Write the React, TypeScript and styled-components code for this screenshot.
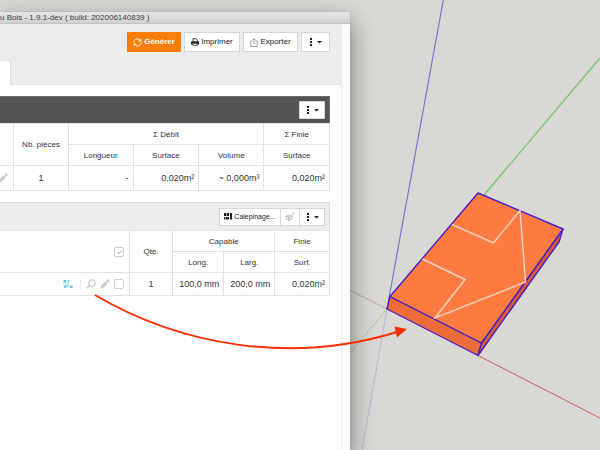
import React from "react";
import styled, { createGlobalStyle } from "styled-components";

const GlobalStyle = createGlobalStyle`
  *, *::before, *::after { box-sizing: border-box; }
  html, body { margin: 0; }
  body {
    font-family: "Liberation Sans", Arial, sans-serif;
    font-size: 9px;
    color: #333;
    background: #d9d8d4;
    overflow: hidden;
  }
`;

const Desktop = styled.main`
  position: relative;
  display: flex;
  min-height: 100vh;
  padding-top: 12px;
`;

const Layer = styled.svg<{ $top?: boolean }>`
  position: absolute;
  inset: 0;
  width: 100%;
  height: 100%;
  z-index: ${(p) => (p.$top ? 2 : 0)};
  pointer-events: none;
`;

const Dialog = styled.section`
  position: relative;
  z-index: 1;
  display: flex;
  flex-direction: column;
  width: calc(100% * 7 / 12);
  background: #fff;
  border-top-right-radius: 3px;
  box-shadow: 0 10px 24px rgba(0, 0, 0, 0.48), 0 0 1px rgba(0, 0, 0, 0.4);
`;

const TitleBar = styled.h1`
  margin: 0;
  height: 12px;
  line-height: 12px;
  font-size: 8px;
  font-weight: 400;
  color: #3c3c3c;
  white-space: nowrap;
  overflow: hidden;
  background: linear-gradient(#e6e6e6, #d0d0d0);
  border-bottom: 1px solid #c2c2c2;
  border-top-right-radius: 3px;
`;

const Body = styled.div`
  flex: 1;
  display: grid;
  grid-template-columns: 1fr 9px;
`;

const ScrollTrack = styled.div`
  background: #fafafa;
  border-left: 1px solid #ececec;
`;

const Header = styled.header`
  height: 61px;
  display: flex;
  flex-direction: column;
  justify-content: space-between;
  background: #ececec;
  border-bottom: 1px solid #e2e2e2;
`;

const Toolbar = styled.div`
  display: flex;
  justify-content: flex-end;
  gap: 3px;
  padding: 8px 11px 0 0;
`;

const Tab = styled.div`
  width: 11px;
  height: 25px;
  margin-bottom: -1px;
  background: #fff;
  border: 1px solid #e0e0e0;
  border-width: 1px 1px 0 0;
  border-top-right-radius: 2px;
`;

const Button = styled.button<{ $primary?: boolean; $small?: boolean; $muted?: boolean; $width?: number }>`
  display: inline-flex;
  align-items: center;
  justify-content: center;
  gap: 2px;
  height: ${(p) => (p.$small ? 18 : 20)}px;
  ${(p) => p.$width && `width: ${p.$width}px;`}
  padding: 0 2px;
  font-family: inherit;
  font-size: ${(p) => (p.$small ? 7 : 8)}px;
  font-weight: ${(p) => (p.$primary ? 700 : 400)};
  line-height: 12px;
  white-space: nowrap;
  color: ${(p) => (p.$primary ? "#fff" : p.$muted ? "#999" : "#222")};
  background: ${(p) => (p.$primary ? "#fb7e0a" : "#fff")};
  border: 1px solid ${(p) => (p.$primary ? "#fb7e0a" : "#d6d6d6")};
  svg { flex-shrink: 0; }
`;

const ButtonGroup = styled.div`
  display: flex;
  & > * + * { margin-left: -1px; }
`;

const Content = styled.div`
  display: flex;
  flex-direction: column;
  gap: 11px;
  padding: 11px 11px 0 0;
`;

const PanelHead = styled.div<{ $dark?: boolean }>`
  display: flex;
  align-items: center;
  justify-content: flex-end;
  height: ${(p) => (p.$dark ? 27 : 28)}px;
  padding-right: 4px;
  background: ${(p) => (p.$dark ? "#545454" : "#ececec")};
  border: 1px solid ${(p) => (p.$dark ? "#6a6a6a" : "#dcdcdc")};
  border-width: 1px 1px 0 0;
`;

const Table = styled.table`
  width: 100%;
  table-layout: fixed;
  border-collapse: collapse;
`;

const Col = styled.col<{ $share: number }>`
  width: ${(p) => p.$share}%;
`;

const cell = `
  border: 1px solid #e2e2e2;
  overflow: hidden;
  white-space: nowrap;
  &:first-child[data-edge] { border-left: 0; }
`;

const Th = styled.th`
  ${cell}
  height: 21px;
  padding: 0;
  font-size: 8px;
  font-weight: 400;
  text-align: center;
`;

const Td = styled.td<{ $align?: string; $tall?: boolean }>`
  ${cell}
  height: ${(p) => (p.$tall ? 25 : 23)}px;
  padding: 0 4px;
  font-size: 9px;
  text-align: ${(p) => p.$align || "right"};
`;

const Actions = styled.div`
  display: flex;
  align-items: center;
  justify-content: flex-end;
  gap: 4px;
  padding-right: 1px;
  color: #c8c8c8;
`;

const Divider = styled.span`
  width: 1px;
  height: 10px;
  margin: 0 1px 0 3px;
  background: #e8e8e8;
`;

const IconButton = styled.button`
  display: inline-flex;
  padding: 0;
  border: 0;
  color: inherit;
  background: none;
`;

const Check = styled.input`
  appearance: none;
  display: block;
  width: 10px;
  height: 10px;
  margin: 0;
  border: 1px solid #ccc;
  border-radius: 2px;
  background: #fff;
  &:checked::after {
    content: "";
    display: block;
    width: 5px;
    height: 3px;
    margin: 2px 0 0 2px;
    border: solid #bbb;
    border-width: 0 0 1px 1px;
    transform: rotate(-45deg);
  }
`;

const RefreshIcon = () => (
  <svg width="9" height="9" viewBox="0 0 18 18" fill="none" stroke="currentColor" strokeWidth="1.7">
    <path d="M1.5 9.5A7.2 7.2 0 0 1 14 4.2M16.5 8.5A7.2 7.2 0 0 1 4 13.8" />
    <path d="M16.5 1v6h-6zM1.5 17v-6h6z" fill="currentColor" stroke="none" />
  </svg>
);

const PrintIcon = () => (
  <svg width="8" height="8" viewBox="0 0 16 16" fill="none" stroke="currentColor">
    <path d="M4 7V1.5h6.5L12.5 4v3" strokeWidth="1.7" />
    <path d="M2 6.5h12a2 2 0 0 1 2 2V13h-3v-2.5H3V13H0V8.5a2 2 0 0 1 2-2z" fill="currentColor" stroke="none" />
    <path d="M3.5 10.5h9v4h-9z" strokeWidth="1.6" />
  </svg>
);

const ExportIcon = () => (
  <svg width="8" height="9" viewBox="0 0 16 18" fill="none" stroke="#777" strokeWidth="1.3">
    <path d="M5 6H1.5v11h13V6H11M8 12V1.5M5 4.5l3-3 3 3" />
  </svg>
);

const MenuIcon = () => (
  <svg width="13" height="8" viewBox="0 0 13 8" fill="currentColor">
    <path d="M1 0h2v2H1zM1 3h2v2H1zM1 6h2v2H1zM8 3h5L10.5 5.500z" />
  </svg>
);

const BoardIcon = () => (
  <svg width="8" height="7" viewBox="0 0 16 14" fill="currentColor">
    <path d="M0 0h5v6H0zM6 0h4v6H6zM0 8h3v5H0zM4 8h6v5H4zM12 0h4v13h-4z" />
  </svg>
);

const PartIcon = () => (
  <svg width="9" height="9" viewBox="0 0 18 18" fill="none" stroke="#999" strokeWidth="1.3">
    <path d="M1 8l6-2 5 2v6l-6 3-5-3zM1 8l5 3 6-3M6 11v6M4 9l4 6M12 2c2-2 5-1 4 1s-2 1-2 3M14 7v1" />
  </svg>
);

const AxesIcon = () => (
  <svg width="10" height="10" viewBox="0 0 20 20" fill="none" stroke="#53bde6" strokeWidth="1.6">
    <path d="M10.5 3v9l5 3M10.5 12l-5 3M8 5l2.5-3L13 5M3 15.5h5M14 17h4v-3" />
    <path d="M1 2h5v5H1zM2 13h4v4H2zM15 13h4v4h-4z" fill="#53bde6" stroke="none" />
    <path d="M4 10h2M1 9h2" />
  </svg>
);

const SearchIcon = () => (
  <svg width="10" height="10" viewBox="0 0 20 20" fill="none" stroke="currentColor">
    <circle cx="12" cy="8" r="6.4" strokeWidth="2.4" />
    <path d="M7.5 12.5l-6 6" strokeWidth="3.4" />
  </svg>
);

const PencilIcon = () => (
  <svg width="10" height="10" viewBox="0 0 20 20" fill="currentColor">
    <path d="M1 19l1.5-6L11 4.5l4.5 4.5L7 17.5zM12.3 3.2l2-2c.8-.8 1.7-.8 2.5 0l2 2c.8.8.8 1.7 0 2.5l-2 2z" />
  </svg>
);

const Menu = ({ small, width }: { small?: boolean; width: number }) => (
  <Button $small={small} $width={width} aria-label="Menu">
    <MenuIcon />
  </Button>
);

const Scene = () => (
  <Layer viewBox="0 0 600 450" preserveAspectRatio="xMinYMin slice" fill="none">
    <path d="M443.3 0L387 309" stroke="#7777cf" strokeWidth="1.2" />
    <path d="M600 58L484 195" stroke="#6ccb68" strokeWidth="1.2" />
    <path d="M478 355.5L600 418" stroke="#c96459" />
    <path d="M387 309L362 450" stroke="#8c8cc6" strokeDasharray="1 1.5" />
    <path d="M387 309L350 353" stroke="#6fc46b" strokeDasharray="1.5 1.5" />
    <path d="M387 309L350 290" stroke="#bd7560" strokeDasharray="1.5 1.5" />
    <g stroke="#4620c8" strokeWidth="1.4" strokeLinejoin="round">
      <path d="M390 296.5L387 309L478 355.5L481.5 343z" fill="#ed6b38" />
      <path d="M481.5 343L478 355.5L559 242L563 229z" fill="#d95c30" />
      <path d="M390 296.5L478 193L563 229L481.5 343z" fill="#ff7b42" />
    </g>
    <path
      d="M452 224.5L493.5 243L520 210.5L525.5 282L435 318L465 279.5L422.5 259"
      stroke="#ffd5c2"
      strokeWidth="1.4"
    />
  </Layer>
);

const Annotation = () => (
  <Layer $top viewBox="0 0 600 450" preserveAspectRatio="xMinYMin slice" fill="none">
    <path d="M95 295C180 345 290 365 397 332" stroke="#ff2d00" strokeWidth="2" />
    <path d="M407 329L394.5 326.5L397 337.5z" fill="#ff2d00" />
  </Layer>
);

export default function App() {
  return (
    <Desktop>
      <GlobalStyle />
      <Scene />
      <Dialog>
        <TitleBar>u Bois - 1.9.1-dev ( build: 202006140839 )</TitleBar>
        <Body>
          <div>
            <Header>
              <Toolbar>
                <Button $primary $width={54}><RefreshIcon />Générer</Button>
                <Button $width={56}><PrintIcon />Imprimer</Button>
                <Button $width={55}><ExportIcon />Exporter</Button>
                <Menu width={29} />
              </Toolbar>
              <Tab />
            </Header>
            <Content>
              <section>
                <PanelHead $dark><Menu small width={26} /></PanelHead>
                <Table>
                  <colgroup>
                    <Col $share={4.2} />
                    <Col $share={16.5} />
                    <Col $share={19.7} />
                    <Col $share={19.9} />
                    <Col $share={19.8} />
                    <Col $share={19.9} />
                  </colgroup>
                  <thead>
                    <tr>
                      <Th rowSpan={2} data-edge />
                      <Th rowSpan={2}>Nb. pièces</Th>
                      <Th colSpan={3}>Σ Débit</Th>
                      <Th>Σ Finie</Th>
                    </tr>
                    <tr>
                      <Th>Longueur</Th>
                      <Th>Surface</Th>
                      <Th>Volume</Th>
                      <Th>Surface</Th>
                    </tr>
                  </thead>
                  <tbody>
                    <tr>
                      <Td $tall data-edge>
                        <Actions><IconButton aria-label="Modifier"><PencilIcon /></IconButton></Actions>
                      </Td>
                      <Td $tall $align="center">1</Td>
                      <Td $tall>-</Td>
                      <Td $tall>0,020m²</Td>
                      <Td $tall>~ 0,000m³</Td>
                      <Td $tall>0,020m²</Td>
                    </tr>
                  </tbody>
                </Table>
              </section>
              <section>
                <PanelHead>
                  <ButtonGroup>
                    <Button $small $width={62}><BoardIcon />Calepinage...</Button>
                    <Button $small $muted $width={20} aria-label="Pièce"><PartIcon /></Button>
                    <Menu small width={26} />
                  </ButtonGroup>
                </PanelHead>
                <Table>
                  <colgroup>
                    <Col $share={39.3} />
                    <Col $share={13.1} />
                    <Col $share={15.5} />
                    <Col $share={15.5} />
                    <Col $share={16.6} />
                  </colgroup>
                  <thead>
                    <tr>
                      <Td as="th" rowSpan={2} data-edge>
                        <Actions><Check type="checkbox" defaultChecked aria-label="Tout sélectionner" /></Actions>
                      </Td>
                      <Th rowSpan={2}>Qte.</Th>
                      <Th colSpan={2}>Capable</Th>
                      <Th>Finie</Th>
                    </tr>
                    <tr>
                      <Th>Long.</Th>
                      <Th>Larg.</Th>
                      <Th>Surf.</Th>
                    </tr>
                  </thead>
                  <tbody>
                    <tr>
                      <Td data-edge>
                        <Actions>
                          <AxesIcon />
                          <Divider />
                          <IconButton aria-label="Voir"><SearchIcon /></IconButton>
                          <IconButton aria-label="Modifier"><PencilIcon /></IconButton>
                          <Check type="checkbox" aria-label="Sélectionner" />
                        </Actions>
                      </Td>
                      <Td $align="center">1</Td>
                      <Td>100,0 mm</Td>
                      <Td>200,0 mm</Td>
                      <Td>0,020m²</Td>
                    </tr>
                  </tbody>
                </Table>
              </section>
            </Content>
          </div>
          <ScrollTrack />
        </Body>
      </Dialog>
      <Annotation />
    </Desktop>
  );
}
